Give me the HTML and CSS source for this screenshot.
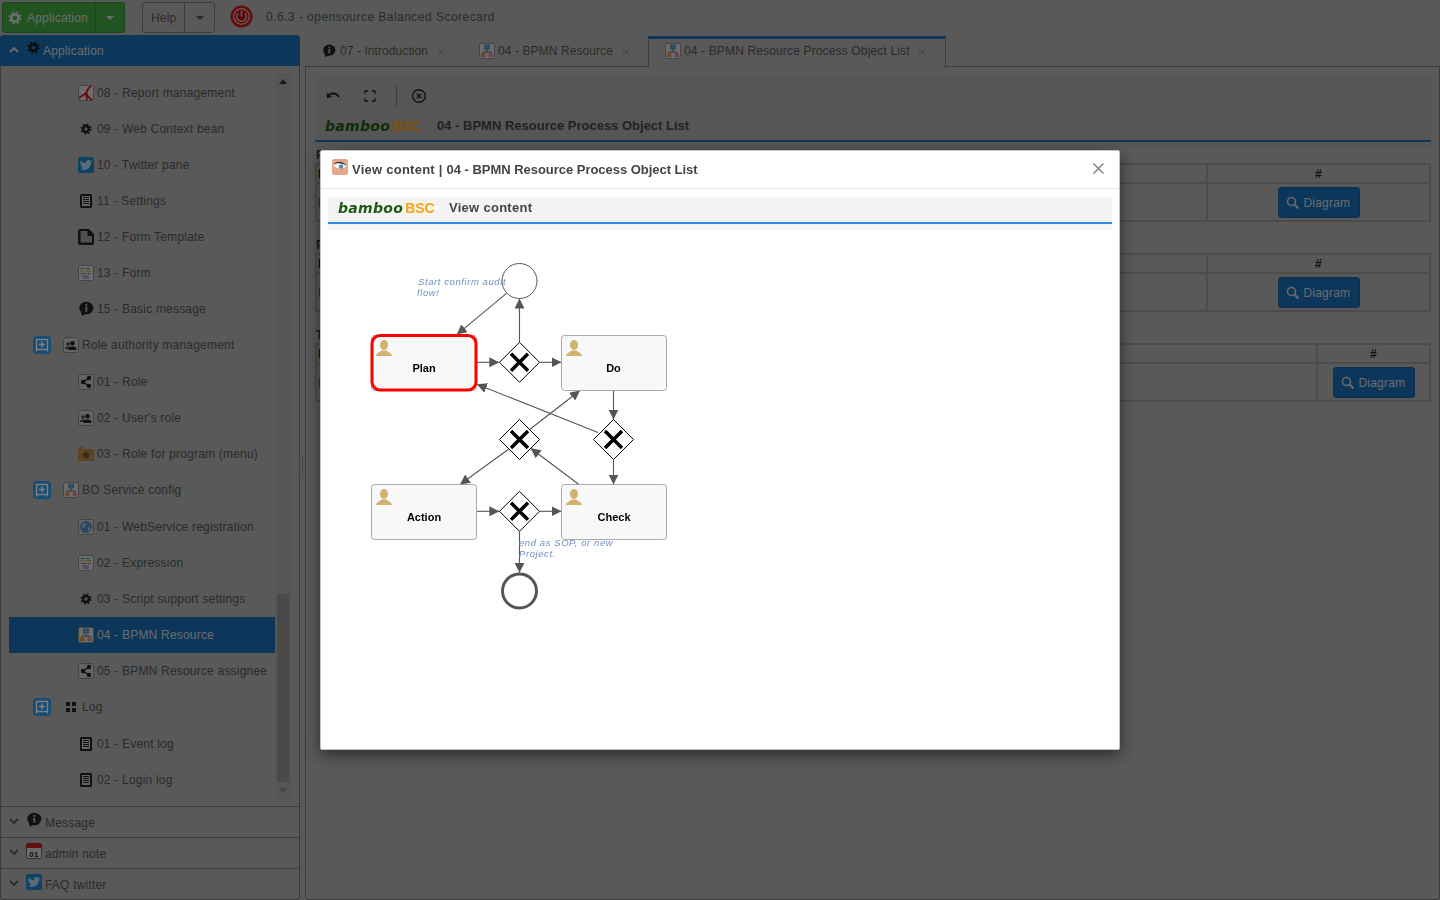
FILE: index.html
```html
<!DOCTYPE html>
<html lang="en">
<head>
    <meta charset="UTF-8">
    <meta name="viewport" content="width=device-width, initial-scale=1.0">
    <title>bambooBSC</title>
    <link rel="stylesheet" href="styles.css">
</head>
<body>

    <!-- Icon set -->
    <svg class="icon-defs" aria-hidden="true">
        <symbol id="i-gear" viewBox="0 0 16 16">
            <circle cx="8" cy="8" r="4" fill="none" stroke="currentColor" stroke-width="3"/>
            <circle cx="8" cy="8" r="6.2" fill="none" stroke="currentColor" stroke-width="2.6" stroke-dasharray="2.4 2.47"/>
        </symbol>
        <symbol id="i-gear-sm" viewBox="-3 -3 22 22">
            <circle cx="8" cy="8" r="4" fill="none" stroke="currentColor" stroke-width="3.4"/>
            <circle cx="8" cy="8" r="6.2" fill="none" stroke="currentColor" stroke-width="2.8" stroke-dasharray="2.4 2.47"/>
        </symbol>
        <symbol id="i-report" viewBox="0 0 16 16">
            <rect x=".5" y=".5" width="15" height="15" rx="2" fill="#d8d8d8" stroke="#888"/>
            <path d="M13 1C10 3 9 6 8 8 6 10 3 11 1 13M8 8c1 3 3 5 6 7M9 5c-1 4-1 7 0 10" fill="none" stroke="#d01010" stroke-width="1.7"/>
        </symbol>
        <symbol id="i-twitter" viewBox="0 0 16 16">
            <rect width="16" height="16" rx="2" fill="#1c86c4"/>
            <g transform="translate(1.8 1.8) scale(.52)">
                <path fill="#b8d8ec" d="M23.953 4.57a10 10 0 01-2.825.775 4.958 4.958 0 002.163-2.723c-.951.555-2.005.959-3.127 1.184a4.92 4.92 0 00-8.384 4.482C7.69 8.095 4.067 6.13 1.64 3.162a4.822 4.822 0 00-.666 2.475c0 1.71.87 3.213 2.188 4.096a4.904 4.904 0 01-2.228-.616v.06a4.923 4.923 0 003.946 4.827 4.996 4.996 0 01-2.212.085 4.936 4.936 0 004.604 3.417 9.867 9.867 0 01-6.102 2.105c-.39 0-.779-.023-1.17-.067a13.995 13.995 0 007.557 2.209c9.053 0 13.998-7.496 13.998-13.985 0-.21 0-.42-.015-.63A9.935 9.935 0 0024 4.59z"/>
            </g>
        </symbol>
        <symbol id="i-list" viewBox="0 0 16 16">
            <rect x="2" y="1" width="12" height="14" rx="1.5" fill="#222"/>
            <rect x="4" y="3" width="8" height="10" fill="#ccc"/>
            <path d="M5 4.5h6M5 6.5h6M5 8.5h6M5 10.5h6" stroke="#222" stroke-width="1"/>
        </symbol>
        <symbol id="i-template" viewBox="0 0 16 16">
            <path d="M2 0h9l5 5v9c0 1-1 2-2 2H2c-1 0-2-1-2-2V2c0-1 1-2 2-2z" fill="#222"/>
            <path d="M2.500 2h7v5h4.500v6.500H2.500z" fill="#a0a0a0"/>
        </symbol>
        <symbol id="i-form" viewBox="0 0 16 16">
            <rect x=".5" y=".5" width="15" height="15" rx="2" fill="#d8d8d8" stroke="#888"/>
            <path d="M2.5 3.5h4M8 3.5h4" stroke="#3a9a8a"/>
            <path d="M2.5 6h3M7 6h6" stroke="#c09030"/>
            <path d="M2.5 8.5h6M9.5 8.5h3" stroke="#608840"/>
            <path d="M4 11h7M5 13h6" stroke="#a050c0"/>
        </symbol>
        <symbol id="i-info" viewBox="0 0 16 16">
            <ellipse cx="8.3" cy="7" rx="7" ry="6.3" fill="#222"/>
            <path d="M3 11l1 4 4-2.5z" fill="#222"/>
            <circle cx="8.3" cy="3.9" r="1.1" fill="#b2b2b2"/>
            <rect x="7.3" y="5.7" width="2" height="5" fill="#b2b2b2"/>
        </symbol>
        <symbol id="i-users" viewBox="0 0 16 16">
            <rect x=".5" y=".5" width="15" height="15" rx="2" fill="#c8c8c8" stroke="#888"/>
            <circle cx="5" cy="7" r="1.8" fill="#444"/>
            <path d="M2 12c0-2 1.5-2.500 3-2.500s3 .5 3 2.500z" fill="#444"/>
            <circle cx="9.5" cy="6.2" r="2.3" fill="#222"/>
            <path d="M5.500 13c0-3 2-3.500 4-3.500s4 .5 4 3.500z" fill="#222"/>
        </symbol>
        <symbol id="i-share" viewBox="0 0 16 16">
            <rect x=".5" y=".5" width="15" height="15" rx="2" fill="#c8c8c8" stroke="#888"/>
            <path d="M11 4L5 8l6 4" fill="none" stroke="#222" stroke-width="1.4"/>
            <circle cx="11" cy="4" r="2.2" fill="#222"/>
            <circle cx="5" cy="8" r="2.2" fill="#222"/>
            <circle cx="11" cy="12" r="2.2" fill="#222"/>
        </symbol>
        <symbol id="i-folder" viewBox="0 0 16 16">
            <path d="M0 2c0-.6.4-1 1-1h4l2 2h8c.6 0 1 .4 1 1v10c0 .6-.4 1-1 1H1c-.6 0-1-.4-1-1z" fill="#b88a40"/>
            <path d="M8 5L4 9h1.300v3h5.400V9H12z" fill="#7a5520"/>
        </symbol>
        <symbol id="i-bpmn" viewBox="0 0 16 16">
            <rect x=".5" y=".5" width="15" height="15" rx="2" fill="#d8d8d8" stroke="#888"/>
            <path d="M8 6v3M4 11V9h8v2" fill="none" stroke="#666"/>
            <rect x="5.5" y="2" width="5" height="4" fill="#62a8dc" stroke="#3a6f9f" stroke-width=".6"/>
            <rect x="2" y="10.5" width="4.5" height="3.5" fill="#e89030"/>
            <rect x="9.5" y="10.5" width="4.5" height="3.5" fill="#e87ca8"/>
        </symbol>
        <symbol id="i-globe" viewBox="0 0 16 16">
            <rect x=".5" y=".5" width="15" height="15" rx="2" fill="#c8c8c8" stroke="#888"/>
            <circle cx="8" cy="8" r="6" fill="#5c8cc8"/>
            <path d="M5 4l3 1-1 3-3 1zM10 8l3 1-2 4-1-2z" fill="#a8c4e4"/>
        </symbol>
        <symbol id="i-plus" viewBox="0 0 18 18">
            <rect width="18" height="18" rx="4" fill="#2f9ae8"/>
            <rect x="3.5" y="3.5" width="11" height="10" fill="none" stroke="#fff" stroke-width="1.4"/>
            <path d="M9 5.500v6M6 8.500h6" stroke="#fff" stroke-width="1.5"/>
            <path d="M3.500 13.500v2M14.500 13.500v2" stroke="#fff" stroke-width="1.4"/>
        </symbol>
        <symbol id="i-grid" viewBox="0 0 16 16">
            <rect x="3" y="3" width="4" height="4" fill="#222"/>
            <rect x="9" y="3" width="4" height="4" fill="#222"/>
            <rect x="3" y="9" width="4" height="4" fill="#222"/>
            <rect x="9" y="9" width="4" height="4" fill="#222"/>
        </symbol>
        <symbol id="i-calendar" viewBox="0 0 16 16">
            <rect x=".5" y=".5" width="15" height="15" rx="2" fill="#d8d8d8" stroke="#666"/>
            <path d="M0 2c0-1 1-2 2-2h12c1 0 2 1 2 2v3H0z" fill="#c02020"/>
            <text x="8" y="13.5" class="cal-day">01</text>
        </symbol>
        <symbol id="i-eye" viewBox="0 0 16 16">
            <rect width="16" height="16" rx="2" fill="#e8a888"/>
            <path d="M1 6c4-4 9-4 14 1-4 3-9 3-12 1z" fill="#fff"/>
            <path d="M1 6c4-5 10-4 14 1-5-3-9-4-14-1z" fill="#333"/>
            <circle cx="9" cy="7.5" r="2.2" fill="#4a8cc8"/>
        </symbol>
        <symbol id="i-search" viewBox="0 0 14 14">
            <circle cx="5.5" cy="5.5" r="4" fill="none" stroke="currentColor" stroke-width="1.5"/>
            <path d="M8.500 8.500l4 4" stroke="currentColor" stroke-width="2"/>
        </symbol>
        <symbol id="i-close" viewBox="0 0 8 8">
            <path d="M.5.5l7 7M7.500.5l-7 7" fill="none" stroke="currentColor" stroke-width="1"/>
        </symbol>
        <symbol id="i-chevron-down" viewBox="0 0 10 6">
            <path d="M1 1l4 4 4-4" fill="none" stroke="currentColor" stroke-width="1.8"/>
        </symbol>
        <symbol id="i-chevron-up" viewBox="0 0 10 6">
            <path d="M1 5l4-4 4 4" fill="none" stroke="currentColor" stroke-width="1.8"/>
        </symbol>
        <symbol id="bpmn-user" viewBox="0 0 16 16">
            <ellipse cx="8" cy="5" rx="4" ry="5"/>
            <path d="M0 16c0-3 4-3.500 5.500-5.500h5c1.500 2 5.500 2.500 5.500 5.500z"/>
        </symbol>
    </svg>

    <!-- Top bar -->
    <header class="topbar">
        <div class="btn-group btn-app">
            <button class="btn-main"><svg class="ico-gear"><use href="#i-gear"/></svg>Application</button>
            <button class="btn-caret"><span class="caret"></span></button>
        </div>
        <div class="btn-group btn-help">
            <button class="btn-main">Help</button>
            <button class="btn-caret"><span class="caret"></span></button>
        </div>
        <svg class="power-logo" viewBox="0 0 24 24">
            <circle cx="12" cy="12" r="11.5" fill="#c01c20"/>
            <circle cx="12" cy="12" r="8" fill="#a81418" stroke="#e8a0a0" stroke-width="1.5"/>
            <path d="M8.500 8.500a5 5 0 107 0" fill="none" stroke="#e8b8b8" stroke-width="1.5"/>
            <path d="M12 6v6" stroke="#e8b8b8" stroke-width="1.5"/>
        </svg>
        <span class="version">0.6.3 - opensource Balanced Scorecard</span>
    </header>

    <div class="workspace">

        <!-- Left menu -->
        <aside class="sidebar">
            <div class="acc-head acc-head-open">
                <svg class="chevron"><use href="#i-chevron-up"/></svg>
                <svg class="acc-gear"><use href="#i-gear"/></svg>
                <span>Application</span>
            </div>
            <div class="tree">
                <ul class="tree-list">
                    <li class="row"><svg class="ico"><use href="#i-report"/></svg>08 - Report management</li>
                    <li class="row"><svg class="ico"><use href="#i-gear-sm"/></svg>09 - Web Context bean</li>
                    <li class="row"><svg class="ico"><use href="#i-twitter"/></svg>10 - Twitter pane</li>
                    <li class="row"><svg class="ico"><use href="#i-list"/></svg>11 - Settings</li>
                    <li class="row"><svg class="ico"><use href="#i-template"/></svg>12 - Form Template</li>
                    <li class="row"><svg class="ico"><use href="#i-form"/></svg>13 - Form</li>
                    <li class="row"><svg class="ico"><use href="#i-info"/></svg>15 - Basic message</li>
                    <li class="row row-parent"><svg class="ico-plus"><use href="#i-plus"/></svg><svg class="ico"><use href="#i-users"/></svg>Role authority management</li>
                    <li class="row"><svg class="ico"><use href="#i-share"/></svg>01 - Role</li>
                    <li class="row"><svg class="ico"><use href="#i-users"/></svg>02 - User's role</li>
                    <li class="row"><svg class="ico"><use href="#i-folder"/></svg>03 - Role for program (menu)</li>
                    <li class="row row-parent"><svg class="ico-plus"><use href="#i-plus"/></svg><svg class="ico"><use href="#i-bpmn"/></svg>BO Service config</li>
                    <li class="row"><svg class="ico"><use href="#i-globe"/></svg>01 - WebService registration</li>
                    <li class="row"><svg class="ico"><use href="#i-form"/></svg>02 - Expression</li>
                    <li class="row"><svg class="ico"><use href="#i-gear-sm"/></svg>03 - Script support settings</li>
                    <li class="row row-selected"><svg class="ico"><use href="#i-bpmn"/></svg>04 - BPMN Resource</li>
                    <li class="row"><svg class="ico"><use href="#i-share"/></svg>05 - BPMN Resource assignee</li>
                    <li class="row row-parent"><svg class="ico-plus"><use href="#i-plus"/></svg><svg class="ico"><use href="#i-grid"/></svg>Log</li>
                    <li class="row"><svg class="ico"><use href="#i-list"/></svg>01 - Event log</li>
                    <li class="row"><svg class="ico"><use href="#i-list"/></svg>02 - Login log</li>
                </ul>
                <div class="scrollbar">
                    <div class="scroll-btn"><span class="arrow-up"></span></div>
                    <div class="scroll-space"></div>
                    <div class="scroll-thumb"></div>
                    <div class="scroll-btn"><span class="arrow-down"></span></div>
                </div>
            </div>
            <div class="acc-head">
                <svg class="chevron"><use href="#i-chevron-down"/></svg>
                <svg class="acc-ico"><use href="#i-info"/></svg>
                <span>Message</span>
            </div>
            <div class="acc-head">
                <svg class="chevron"><use href="#i-chevron-down"/></svg>
                <svg class="acc-ico"><use href="#i-calendar"/></svg>
                <span>admin note</span>
            </div>
            <div class="acc-head">
                <svg class="chevron"><use href="#i-chevron-down"/></svg>
                <svg class="acc-ico"><use href="#i-twitter"/></svg>
                <span>FAQ twitter</span>
            </div>
        </aside>

        <div class="splitter"><span class="splitter-grip"></span></div>

        <!-- Tabs and page content -->
        <section class="panel">
            <nav class="tabs">
                <div class="tab"><svg class="ico tab-ico-info"><use href="#i-info"/></svg>07 - Introduction<svg class="tab-close"><use href="#i-close"/></svg></div>
                <div class="tab"><svg class="ico"><use href="#i-bpmn"/></svg>04 - BPMN Resource<svg class="tab-close"><use href="#i-close"/></svg></div>
                <div class="tab tab-active"><svg class="ico"><use href="#i-bpmn"/></svg>04 - BPMN Resource Process Object List<svg class="tab-close"><use href="#i-close"/></svg></div>
            </nav>
            <div class="panel-body">
                <div class="band band-page">
                    <div class="toolbar">
                        <svg class="tool" viewBox="0 0 16 16"><path d="M3 8c2-3 8-4 11 1" fill="none" stroke="#222" stroke-width="1.8"/><path d="M1.500 4.500L2 10l5-1z" fill="#222"/></svg>
                        <svg class="tool" viewBox="0 0 16 16"><path d="M3 6V3h3M10 3h3v3M13 10v3h-3M6 13H3v-3" fill="none" stroke="#222" stroke-width="1.3"/></svg>
                        <span class="tool-sep"></span>
                        <svg class="tool" viewBox="0 0 16 16"><circle cx="8" cy="8" r="6.3" fill="none" stroke="#222" stroke-width="1.4"/><path d="M5.800 5.800l4.400 4.400M10.200 5.800l-4.400 4.400" stroke="#222" stroke-width="1.4"/></svg>
                    </div>
                    <div class="band-title">
                        <span class="logo"><i>bamboo</i><b>BSC</b></span>
                        <strong>04 - BPMN Resource Process Object List</strong>
                    </div>
                </div>

                <div class="group">
                    <div class="group-label">P</div>
                    <table class="grid">
                        <tr><th>I</th><th class="col-action">#</th></tr>
                        <tr><td>P</td><td class="col-action"><button class="btn-diagram"><svg><use href="#i-search"/></svg>Diagram</button></td></tr>
                    </table>
                </div>
                <div class="group">
                    <div class="group-label">P</div>
                    <table class="grid">
                        <tr><th>I</th><th class="col-action">#</th></tr>
                        <tr><td>P</td><td class="col-action"><button class="btn-diagram"><svg><use href="#i-search"/></svg>Diagram</button></td></tr>
                    </table>
                </div>
                <div class="group">
                    <div class="group-label">T</div>
                    <table class="grid">
                        <tr><th>I</th><th class="col-action-small">#</th></tr>
                        <tr><td>P</td><td class="col-action-small"><button class="btn-diagram"><svg><use href="#i-search"/></svg>Diagram</button></td></tr>
                    </table>
                </div>
            </div>
        </section>
    </div>

    <!-- Dialog -->
    <div class="backdrop">
        <div class="modal">
            <div class="modal-header">
                <svg class="modal-ico"><use href="#i-eye"/></svg>
                <span class="modal-title"><span class="modal-title-prefix">View content | </span>04 - BPMN Resource Process Object List</span>
                <svg class="modal-close" viewBox="0 0 11 11"><path d="M.5.5l10 10M10.500.5l-10 10" fill="none" stroke="#777" stroke-width="1.3"/></svg>
            </div>
            <div class="modal-body">
                <div class="band band-modal">
                    <div class="band-title">
                        <span class="logo"><i>bamboo</i><b>BSC</b></span>
                        <strong>View content</strong>
                    </div>
                </div>

                <svg class="diagram" viewBox="328 230 784 512">
                    <defs>
                        <marker id="arrow" viewBox="0 0 10 10" refX="10" refY="5" markerWidth="10" markerHeight="10" markerUnits="userSpaceOnUse" orient="auto">
                            <path d="M0 0L10 5L0 10z" fill="#555"/>
                        </marker>
                    </defs>

                    <!-- flows -->
                    <g class="flow">
                        <line x1="506.5" y1="293.3" x2="456.8" y2="334.6"/>
                        <line x1="519.5" y1="342.7" x2="519.5" y2="298.5"/>
                        <line x1="477" y1="362.3" x2="499.3" y2="362.3"/>
                        <line x1="539.7" y1="362.3" x2="561.5" y2="362.3"/>
                        <line x1="613.5" y1="390.5" x2="613.5" y2="419.5"/>
                        <line x1="598" y1="432.5" x2="476.8" y2="384.3"/>
                        <line x1="529" y1="430" x2="580" y2="390.5"/>
                        <line x1="508.5" y1="449.3" x2="460" y2="484.5"/>
                        <line x1="613.5" y1="459.5" x2="613.5" y2="484.5"/>
                        <line x1="579" y1="484.5" x2="530.7" y2="448.3"/>
                        <line x1="476.5" y1="511.3" x2="499.3" y2="511.3"/>
                        <line x1="539.7" y1="511.3" x2="561.5" y2="511.3"/>
                        <line x1="519.5" y1="531.3" x2="519.5" y2="572.7"/>
                    </g>

                    <!-- events -->
                    <circle class="start-event" cx="519.5" cy="281" r="17.5"/>
                    <circle class="end-event" cx="519.5" cy="591" r="17"/>

                    <!-- tasks -->
                    <rect class="task" x="371.5" y="335.5" width="105" height="55" rx="3"/>
                    <rect class="task-active" x="372" y="335.5" width="104" height="54.5" rx="8"/>
                    <rect class="task" x="561.5" y="335.5" width="105" height="55" rx="3"/>
                    <rect class="task" x="371.5" y="484.5" width="105" height="55" rx="3"/>
                    <rect class="task" x="561.5" y="484.5" width="105" height="55" rx="3"/>

                    <use class="task-user" href="#bpmn-user" x="376" y="340" width="16" height="16"/>
                    <use class="task-user" href="#bpmn-user" x="566" y="340" width="16" height="16"/>
                    <use class="task-user" href="#bpmn-user" x="376" y="489" width="16" height="16"/>
                    <use class="task-user" href="#bpmn-user" x="566" y="489" width="16" height="16"/>

                    <text class="task-name" x="424" y="372">Plan</text>
                    <text class="task-name" x="613.5" y="372">Do</text>
                    <text class="task-name" x="424" y="521">Action</text>
                    <text class="task-name" x="614" y="521">Check</text>

                    <!-- gateways -->
                    <g class="gateway">
                        <path d="M519.5 342.3l20 20-20 20-20-20z"/>
                        <path class="gateway-x" d="M511 353.8l17 17M528 353.800l-17 17"/>
                        <path d="M519.5 419.5l20 20-20 20-20-20z"/>
                        <path class="gateway-x" d="M511 431l17 17M528 431l-17 17"/>
                        <path d="M613.5 419.5l20 20-20 20-20-20z"/>
                        <path class="gateway-x" d="M605 431l17 17M622 431l-17 17"/>
                        <path d="M519.5 491.3l20 20-20 20-20-20z"/>
                        <path class="gateway-x" d="M511 502.800l17 17M528 502.800l-17 17"/>
                    </g>

                    <!-- notes -->
                    <text class="note" x="418" y="285">Start confirm audit</text>
                    <text class="note" x="417" y="296">flow!</text>
                    <text class="note" x="519" y="546">end as SOP, or new</text>
                    <text class="note" x="519" y="557">Project.</text>
                </svg>
            </div>
        </div>
    </div>

</body>
</html>
```

FILE: styles.css
```css
* {
    box-sizing: border-box;
}
html, body {
    height: 100%;
}
body {
    margin: 0;
    background-color: #b2b2b2;
    color: #555;
    font-family: "Liberation Sans", Arial, sans-serif;
    font-size: 12px;
    letter-spacing: .2px;
    overflow: hidden;
    display: flex;
    flex-direction: column;
}
button {
    font: inherit;
    letter-spacing: inherit;
}
.icon-defs {
    display: none;
}
.cal-day {
    font-size: 8px;
    font-weight: bold;
    text-anchor: middle;
    fill: #222;
}

/* Top bar */
.topbar {
    height: 35px;
    flex-shrink: 0;
    display: flex;
    align-items: flex-start;
    padding: 2px 0 0 2px;
}
.btn-group {
    display: flex;
    height: 31px;
    border-radius: 3px;
    border: 1px solid #787878;
}
.btn-group button {
    background: none;
    border: none;
    padding: 0;
    color: inherit;
    display: flex;
    align-items: center;
    justify-content: flex-start;
}
.btn-app {
    width: 123px;
    background-color: #42a842;
    border-color: #3a8a3a;
    color: #d8d8d8;
}
.btn-app .btn-main {
    width: 93px;
    padding-left: 5px;
    border-right: 1px solid #3a8a3a;
}
.btn-group .btn-caret {
    flex: 1;
    justify-content: center;
}
.ico-gear {
    width: 14px;
    height: 14px;
    margin-right: 5px;
}
.btn-help {
    width: 73px;
    margin-left: 17px;
}
.btn-help .btn-main {
    width: 42px;
    padding-left: 8px;
    border-right: 1px solid #787878;
}
.caret {
    width: 0;
    height: 0;
    border-left: 4px solid transparent;
    border-right: 4px solid transparent;
    border-top: 4px solid currentColor;
}
.power-logo {
    width: 23px;
    height: 23px;
    margin: 3px 0 0 15px;
}
.version {
    margin: 8px 0 0 13px;
    letter-spacing: .47px;
}

/* Main layout */
.workspace {
    flex: 1;
    display: flex;
    min-height: 0;
}
.sidebar {
    width: 300px;
    flex-shrink: 0;
    display: flex;
    flex-direction: column;
    border: 1px solid #787878;
    border-top: none;
    border-radius: 4px 4px 3px 3px;
}
.splitter {
    width: 5px;
    flex-shrink: 0;
    display: flex;
    align-items: center;
    justify-content: center;
}
.splitter-grip {
    width: 2px;
    height: 20px;
    border-left: 1px dotted #787878;
}
.panel {
    flex: 1;
    min-width: 0;
    display: flex;
    flex-direction: column;
}

/* Accordion */
.acc-head {
    height: 31px;
    flex-shrink: 0;
    display: flex;
    align-items: center;
    border-top: 1px solid #787878;
    padding-left: 8px;
}
.acc-head span {
    padding-top: 2px;
}
.acc-head-open {
    margin: 0 -1px;
    padding-left: 9px;
    background-color: #186eb6;
    border-top: none;
    border-radius: 4px 4px 0 0;
    color: #d8d8d8;
}
.acc-head-open span {
    padding-top: 0;
}
.chevron {
    width: 10px;
    height: 6px;
    margin: 0 7px 3px 0;
}
.acc-head-open .chevron {
    margin: 0 8px 2px 0;
    color: #d8d8d8;
}
.acc-gear {
    width: 13px;
    height: 13px;
    margin: 0 3px 7px 0;
    color: #1a1a1a;
}
.acc-ico {
    width: 16px;
    height: 16px;
    margin: 0 3px 5px 0;
}

/* Tree */
.tree {
    flex: 1;
    min-height: 0;
    display: flex;
}
.tree-list {
    list-style: none;
    margin: 0;
    padding: 9px 0 0 8px;
    width: 274px;
    overflow: hidden;
}
.row {
    height: 36px;
    display: flex;
    align-items: center;
    padding-left: 69px;
    white-space: nowrap;
}
.row-parent {
    height: 37px;
    padding: 0 0 1px 24px;
}
.row-selected {
    background-color: #186eb6;
    color: #d8d8d8;
}
.ico {
    width: 16px;
    height: 16px;
    flex-shrink: 0;
    margin-right: 3px;
    color: #222;
}
.ico-plus {
    width: 18px;
    height: 18px;
    margin-right: 12px;
    flex-shrink: 0;
}
.scrollbar {
    width: 16px;
    margin: 7px 0;
    display: flex;
    flex-direction: column;
    background-color: #adadad;
}
.scroll-btn {
    height: 17px;
    display: flex;
    align-items: center;
    justify-content: center;
}
.scroll-space {
    flex: 1;
}
.scroll-thumb {
    height: 188px;
    margin: 0 2px;
    background-color: #949494;
}
.arrow-up {
    border-left: 4px solid transparent;
    border-right: 4px solid transparent;
    border-bottom: 5px solid #333;
}
.arrow-down {
    border-left: 4px solid transparent;
    border-right: 4px solid transparent;
    border-top: 5px solid #8a8a8a;
}

/* Tabs */
.tabs {
    height: 32px;
    flex-shrink: 0;
    display: flex;
    border-bottom: 1px solid #787878;
}
.tab {
    display: flex;
    align-items: center;
    padding: 0 0 2px 17px;
    margin-top: 1px;
    height: 31px;
    letter-spacing: .08px;
}
.tab-ico-info {
    width: 14px;
    height: 14px;
    margin-right: 4px;
}
.tab-active {
    margin-left: 1px;
    padding: 0 0 5px 16px;
    height: 32px;
    background-color: #b2b2b2;
    border: 1px solid #787878;
    border-top: 3px solid #186eb6;
    border-bottom: none;
    letter-spacing: .15px;
}
.tab-close {
    width: 8px;
    height: 8px;
    margin: 2px 17px 0 9px;
    color: #8a8a8a;
}
.tab-active .tab-close {
    margin-left: 8px;
    margin-right: 19px;
}

/* Page content */
.panel-body {
    flex: 1;
    min-height: 0;
    padding: 8px 8px 0 9px;
    border: 1px solid #787878;
    border-top: none;
    border-radius: 0 0 3px 3px;
}
.band {
    background-color: #adadad;
    padding-bottom: 6px;
}
.band-page {
    padding-top: 10px;
}
.band-modal {
    background-color: #f4f4f4;
}
.toolbar {
    height: 22px;
    margin-bottom: 3px;
    display: flex;
    align-items: center;
    padding-left: 10px;
}
.tool {
    width: 16px;
    height: 16px;
    margin-right: 21px;
}
.tool-sep {
    width: 1px;
    height: 20px;
    background-color: #787878;
    margin: 0 14px 0 -3px;
}
.band-title {
    display: flex;
    align-items: center;
    padding: 1px 0 0 10px;
    border-bottom: 2px solid #186eb6;
    box-sizing: content-box;
    height: 29px;
    font-size: 13px;
    font-weight: bold;
    letter-spacing: 0;
}
.band-title strong {
    color: #444;
}
.band-modal .band-title {
    height: 21px;
    padding: 0 0 4px 10px;
    border-bottom-color: #2f8fe6;
}
.band-modal .band-title strong {
    letter-spacing: .28px;
}
.logo {
    width: 112px;
    flex-shrink: 0;
    display: flex;
    align-items: baseline;
}
.band-modal .logo {
    width: 111px;
}
.logo i {
    font-family: "DejaVu Sans", sans-serif;
    font-size: 14px;
    font-weight: bold;
    letter-spacing: .3px;
    color: #1d5a12;
}
.logo b {
    margin-left: 2px;
    font-size: 14px;
    color: #ffa010;
}

/* Tables behind the dialog */
.group {
    margin-bottom: 16px;
}
.group-label {
    height: 15px;
    line-height: 15px;
    padding-left: 1px;
    color: #333;
    font-weight: bold;
}
.grid {
    width: 100%;
    border-collapse: separate;
    border-spacing: 0;
    border: 1px solid #989898;
}
.grid th, .grid td {
    border: 1px solid #989898;
    padding: 0 1px;
    text-align: left;
}
.grid th {
    height: 19px;
    color: #222;
}
.grid td {
    height: 38px;
    padding: 3px 0 2px 1px;
}
.grid .col-action, .grid .col-action-small {
    text-align: center;
    padding-left: 0;
    padding-right: 0;
}
.grid .col-action {
    width: 223px;
}
.grid .col-action-small {
    width: 113px;
}
.btn-diagram {
    display: flex;
    align-items: center;
    width: 82px;
    height: 31px;
    margin: 0 auto;
    padding: 0 0 0 7px;
    background-color: #186eb6;
    border: 1px solid #14619f;
    border-radius: 3px;
    color: #d8d8d8;
}
.btn-diagram svg {
    width: 14px;
    height: 14px;
    margin-right: 4px;
}

/* Dialog */
.backdrop {
    position: fixed;
    top: 0;
    left: 0;
    right: 0;
    bottom: 0;
    background-color: rgba(0, 0, 0, 0.5);
    display: flex;
    align-items: center;
    justify-content: center;
}
.modal {
    width: 800px;
    height: 600px;
    background-color: white;
    border: 1px solid #c4c4c4;
    border-radius: 2px;
    box-shadow: 0 5px 15px rgba(0, 0, 0, 0.5);
    color: #333;
}
.modal-header {
    height: 38px;
    display: flex;
    align-items: center;
    padding: 0 15px 1px 11px;
    border-bottom: 1px solid #e5e5e5;
}
.modal-ico {
    width: 16px;
    height: 16px;
    margin: 0 4px 4px 0;
    flex-shrink: 0;
}
.modal-title {
    flex: 1;
    font-size: 13px;
    font-weight: bold;
    letter-spacing: -.03px;
    color: #444;
}
.modal-title-prefix {
    letter-spacing: .25px;
}
.modal-close {
    width: 11px;
    height: 11px;
    margin-bottom: 2px;
}
.modal-body {
    padding: 8px 7px;
}
.diagram {
    display: block;
    width: 784px;
    height: 512px;
}

/* Diagram */
.flow line {
    stroke: #555;
    stroke-width: 1.1;
    marker-end: url(#arrow);
}
.start-event {
    fill: white;
    stroke: #555;
    stroke-width: 1;
}
.end-event {
    fill: white;
    stroke: #555;
    stroke-width: 3;
}
.task {
    fill: #f8f8f8;
    stroke: #aaa;
}
.task-active {
    fill: none;
    stroke: #f00;
    stroke-width: 3;
}
.task-user {
    fill: #d1b26f;
}
.task-name {
    font-size: 11px;
    font-weight: bold;
    text-anchor: middle;
    fill: black;
    letter-spacing: 0;
}
.gateway path {
    fill: white;
    stroke: black;
    stroke-width: 1;
}
.gateway .gateway-x {
    fill: none;
    stroke-width: 3.5;
}
.note {
    font-size: 9.5px;
    font-style: italic;
    fill: #6d8fc4;
    letter-spacing: .58px;
}
```
